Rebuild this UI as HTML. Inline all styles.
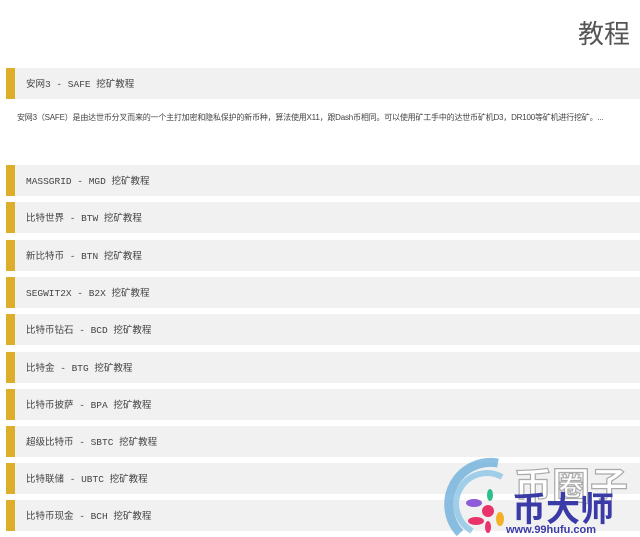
<!DOCTYPE html>
<html><head><meta charset="utf-8"><style>
body{margin:0;width:640px;height:537px;background:#fff;position:relative;overflow:hidden;font-family:"Liberation Mono","Noto Sans CJK SC",monospace;}
.t{position:absolute;right:10px;top:14px;font-size:26px;color:#555;font-family:"Liberation Sans","Noto Sans CJK SC",sans-serif;}
.r{position:absolute;left:6px;width:634px;height:31px;background:#f1f1f1;border-left:9px solid #dcae2a;box-sizing:border-box;font-size:9.5px;color:#444;line-height:33px;padding-left:11px;}
.p{position:absolute;left:17px;top:112px;font-size:8px;color:#444;white-space:nowrap;letter-spacing:-0.2px;font-family:"Liberation Sans","Noto Sans CJK SC",sans-serif;}
</style></head><body>
<div class="t">教程</div>
<div class="r" style="top:68px">安网3 - SAFE 挖矿教程</div>
<div class="p">安网3（SAFE）是由达世币分叉而来的一个主打加密和隐私保护的新币种，算法使用X11，跟Dash币相同。可以使用矿工手中的达世币矿机D3，DR100等矿机进行挖矿。...</div>
<div class="r" style="top:165px">MASSGRID - MGD 挖矿教程</div>
<div class="r" style="top:202px">比特世界 - BTW 挖矿教程</div>
<div class="r" style="top:240px">新比特币 - BTN 挖矿教程</div>
<div class="r" style="top:277px">SEGWIT2X - B2X 挖矿教程</div>
<div class="r" style="top:314px">比特币钻石 - BCD 挖矿教程</div>
<div class="r" style="top:352px">比特金 - BTG 挖矿教程</div>
<div class="r" style="top:389px">比特币披萨 - BPA 挖矿教程</div>
<div class="r" style="top:426px">超级比特币 - SBTC 挖矿教程</div>
<div class="r" style="top:463px">比特联储 - UBTC 挖矿教程</div>
<div class="r" style="top:500px">比特币现金 - BCH 挖矿教程</div>
<svg style="position:absolute;left:440px;top:455px" width="200" height="82">
<path d="M20 78 A42 42 0 0 1 58 8" stroke="#6fb0dc" stroke-width="9" fill="none" opacity=".8"/>
<path d="M32 76 A30 30 0 0 1 62 22" stroke="#8cc4e6" stroke-width="6" fill="none" opacity=".8"/>
<circle cx="48" cy="56" r="6" fill="#e8336b"/>
<ellipse cx="50" cy="40" rx="3" ry="6" fill="#2bbf8a"/>
<ellipse cx="34" cy="48" rx="8" ry="4" fill="#8e5bd9"/>
<ellipse cx="36" cy="66" rx="8" ry="4" fill="#e8336b"/>
<ellipse cx="48" cy="72" rx="3" ry="6" fill="#e8336b"/>
<ellipse cx="60" cy="64" rx="4" ry="7" fill="#f3b12a"/>
<text x="74" y="45" font-size="38" fill="#fff" stroke="#aaa" stroke-width="1.2" font-family="Noto Sans CJK SC,sans-serif" font-weight="bold">币圈子</text>
<text x="72" y="66" font-size="34" fill="#3b3ba8" font-family="Noto Sans CJK SC,sans-serif" font-weight="bold">币大师</text>
<text x="66" y="78" font-size="11" fill="#3b3ba8" font-family="Liberation Sans,sans-serif" font-weight="bold">www.99hufu.com</text>
</svg>
</body></html>
